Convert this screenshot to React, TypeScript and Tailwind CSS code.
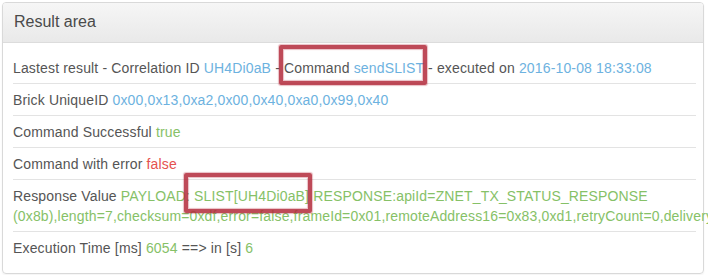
const blue = "text-[#6db2e0]";
const green = "text-[#86c167]";

const Row = ({ first, children }: { first?: boolean; children: React.ReactNode }) => (
  <div className={`pt-[6px] pb-[5px] leading-5 ${first ? "" : "border-t border-[#e3e3e3]"}`}>{children}</div>
);

const Scribble = ({ className }: { className: string }) => (
  <div
    className={`pointer-events-none absolute rounded-[2px] border-[4px] border-[#b32a3b]/85 shadow-[0_0_1px_1px_rgba(181,40,58,0.3),inset_0_0_1px_1px_rgba(181,40,58,0.3)] ${className}`}
  />
);

export default function App() {
  return (
    <div className="relative h-[275px] w-[708px] overflow-hidden bg-white font-['Liberation_Sans',Arial,sans-serif] text-[14px] text-[#555]">
      <div className="ml-[2px] mt-[2px] w-[702px] rounded-[4px] border border-[#d9d9d9] shadow-[0_1px_2px_rgba(0,0,0,0.05)]">
        <div className="rounded-t-[3px] border-b border-[#dcdcdc] bg-gradient-to-b from-[#f6f6f6] to-[#e9e9e9] px-[11px] pt-[9px] pb-[10px] text-[16px] leading-5 text-[#4a4a4a]">
          Result area
        </div>
        <div className="pl-[10px] pr-[7px] pt-[9px] pb-[10px] tracking-[0.15px]">
          <Row first>
            Lastest result - Correlation ID <span className={blue}>UH4Di0aB</span> - Command{" "}
            <span className={blue}>sendSLIST</span> - executed on{" "}
            <span className={blue}>2016-10-08 18:33:08</span>
          </Row>
          <Row>
            Brick UniqueID <span className={blue}>0x00,0x13,0xa2,0x00,0x40,0xa0,0x99,0x40</span>
          </Row>
          <Row>
            Command Successful <span className={green}>true</span>
          </Row>
          <Row>
            Command with error <span className="text-[#e5524f]">false</span>
          </Row>
          <Row>
            Response Value{" "}
            <span className={green}>
              PAYLOAD: SLIST[UH4Di0aB] RESPONSE:apiId=ZNET_TX_STATUS_RESPONSE
              (0x8b),length=7,checksum=0xdf,error=false,frameId=0x01,remoteAddress16=0x83,0xd1,retryCount=0,deliveryStatus=SUCCESS,discoveryStatus=NO_DISCOVERY
            </span>
          </Row>
          <Row>
            Execution Time [ms] <span className={green}>6054</span> ==&gt; in [s] <span className={green}>6</span>
          </Row>
        </div>
      </div>
      <Scribble className="left-[279px] top-[45px] h-[40px] w-[148px]" />
      <Scribble className="left-[184px] top-[173px] h-[40px] w-[128px]" />
    </div>
  );
}
